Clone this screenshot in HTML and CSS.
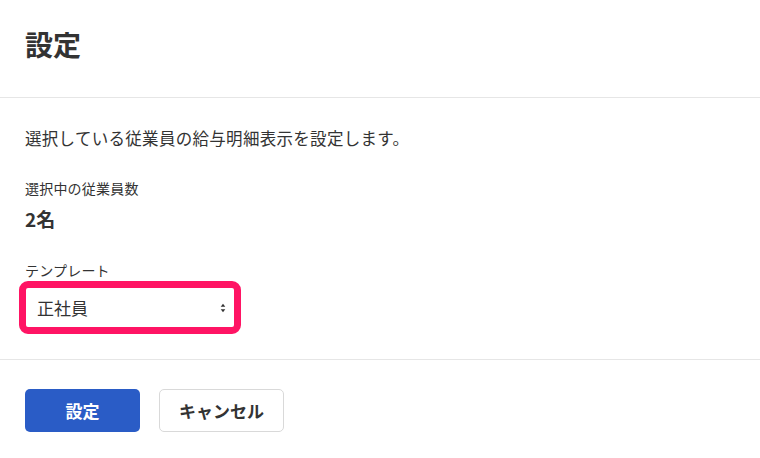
FILE: index.html
```html
<!DOCTYPE html>
<html lang="ja">
<head>
<meta charset="utf-8">
<link rel="stylesheet" href="styles.css">
</head>
<body>
<div class="dialog">
  <header class="dialog-header">
    <h1 class="title">設定</h1>
  </header>
  <section class="dialog-body">
    <p class="desc">選択している従業員の給与明細表示を設定します。</p>
    <div class="field">
      <div class="label">選択中の従業員数</div>
      <div class="value">2名</div>
    </div>
    <div class="field field-template">
      <div class="label">テンプレート</div>
      <div class="select">
        <span class="select-text">正社員</span>
        <svg class="select-arrow" width="6" height="10" viewBox="0 0 6 10"><path d="M3 0.8 L5.3 3.8 H0.7 Z M3 9.2 L5.3 6.2 H0.7 Z" fill="#333"/></svg>
      </div>
    </div>
  </section>
  <footer class="dialog-footer">
    <button class="btn btn-primary">設定</button>
    <button class="btn btn-secondary">キャンセル</button>
  </footer>
</div>
</body>
</html>
```
FILE: styles.css
```css
html, body {
  margin: 0;
  padding: 0;
  background: #ffffff;
}
body {
  font-family: "Noto Sans CJK JP", "Noto Sans", sans-serif;
  color: #333333;
  width: 760px;
  height: 458px;
  overflow: hidden;
}
.dialog-header {
  height: 97px;
  border-bottom: 1px solid #e6e6e6;
  display: flex;
  align-items: center;
  padding: 0 25px;
  box-sizing: content-box;
}
.title {
  margin: 0 0 10px 0;
  font-size: 28px;
  font-weight: 700;
  line-height: 36px;
}
.dialog-body {
  padding: 27px 25px 25px 25px;
  border-bottom: 1px solid #e6e6e6;
}
.desc {
  margin: 0;
  font-size: 16.5px;
  line-height: 26px;
  letter-spacing: 0.3px;
}
.field {
  margin-top: 27px;
}
.label {
  font-size: 14px;
  line-height: 20px;
  letter-spacing: 0.2px;
}
.value {
  margin-top: 9px;
  font-size: 19px;
  font-weight: 700;
  line-height: 24px;
}
.field-template {
  margin-top: 29px;
}
.select {
  margin-top: 1px;
  margin-left: -6px;
  width: 189px;
  height: 39px;
  border: 7px solid #ff1464;
  border-radius: 9px;
  display: flex;
  align-items: center;
  justify-content: space-between;
  padding: 0 8px 0 11px;
  box-sizing: content-box;
  background: #fff;
}
.select-text {
  font-size: 17px;
  line-height: 24px;
}
.select-arrow {
  display: block;
}
.dialog-footer {
  display: flex;
  gap: 19px;
  padding: 29px 25px 0 25px;
}
.btn {
  height: 43px;
  border-radius: 5px;
  font-family: "Noto Sans CJK JP", "Noto Sans", sans-serif;
  font-size: 17px;
  font-weight: 700;
  cursor: pointer;
  padding: 0;
}
.btn-primary {
  width: 115px;
  background: #2a5cc6;
  color: #ffffff;
  border: none;
}
.btn-secondary {
  width: 125px;
  background: #ffffff;
  color: #333333;
  border: 1px solid #d9d9d9;
}
```
